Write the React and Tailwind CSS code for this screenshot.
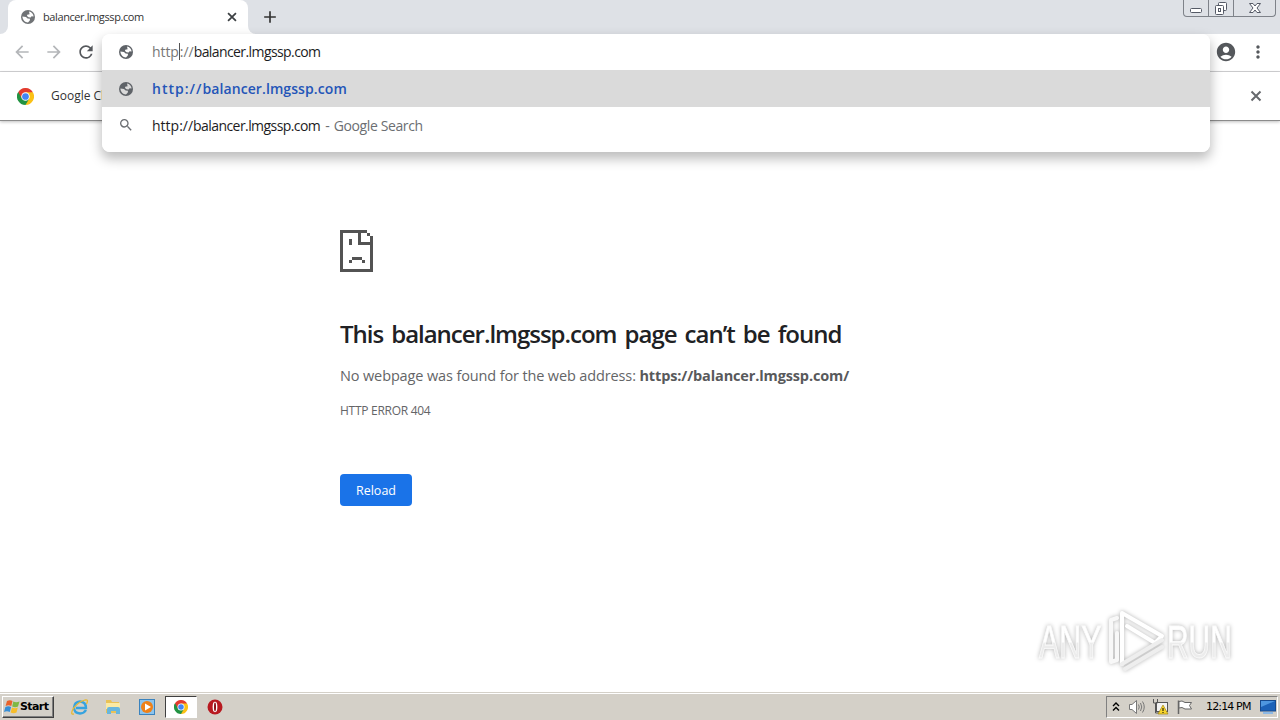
import { MdSearch, MdRefresh, MdArrowBack, MdArrowForward, MdAccountCircle, MdMoreVert, MdAdd } from "react-icons/md";

/* ── Shared icons ─────────────────────────── */
function Globe({ className, land = "#fff" }) {
  return (
    <svg viewBox="0 0 16 16" className={className}>
      <circle cx="8" cy="8" r="7" fill="currentColor" />
      <path d="M9 2.4C11.6 2.8 13.5 5 13.6 7.6L11.6 7.2L10.6 8.6L8.6 8.2L7 7L7.2 5.8L9.6 5.2Z" fill={land} />
      <path d="M2.4 7.6L6 8L7.6 9.6L10 9.8L9.8 11.4L8 13.6C5 13.4 2.5 11 2.4 7.6Z" fill={land} />
    </svg>
  );
}

function CloseIcon({ className }) {
  return (
    <svg viewBox="0 0 16 16" className={className} fill="none" stroke="currentColor" strokeWidth="2">
      <path d="M3.5 3.5L12.5 12.5M12.5 3.5L3.5 12.5" />
    </svg>
  );
}

function ChromeLogo({ className }) {
  return (
    <svg viewBox="0 0 48 48" className={className}>
      <path d="M24 24 L3.2 12 A24 24 0 0 1 44.8 12 Z" fill="#e33b2e" />
      <path d="M24 24 L44.8 12 A24 24 0 0 1 24 48 Z" fill="#fbc116" />
      <path d="M24 24 L24 48 A24 24 0 0 1 3.2 12 Z" fill="#229342" />
      <path d="M24 12 H44.8 L34.4 30 Z" fill="#fbc116" />
      <path d="M34.4 30 L24 48 L13.6 30 Z" fill="#229342" />
      <path d="M13.6 30 L3.2 12 L24 12 Z" fill="#e33b2e" />
      <path d="M3.2 12 L13.6 30 L8 34 L0 24 Z" fill="#229342" />
      <circle cx="24" cy="24" r="12" fill="#fff" />
      <circle cx="24" cy="24" r="9.5" fill="#4285f4" />
    </svg>
  );
}

function SadPage() {
  return (
    <svg viewBox="0 0 33 42" className="block h-[42px] w-[33px]" shapeRendering="crispEdges" fill="#535353">
      <path d="M0 0H27V3H3V39H30V15H18V3H21V12H30V6H33V42H0Z" />
      <path d="M27 3H30V6H27Z M9 9H12V15H9Z M12 27H22V30H12Z M9 30H12V33H9Z M22 30H25V33H22Z" />
    </svg>
  );
}

/* ── Browser chrome ───────────────────────── */
function TabStrip() {
  return (
    <div className="flex h-[34px] bg-[#dee1e6]">
      <div className="w-2 bg-white">
        <div className="h-full rounded-br-lg bg-[#dee1e6]" />
      </div>
      <div className="flex w-60 items-center rounded-t-lg bg-white pl-3 pr-[9px]">
        <Globe className="size-4 text-[#707376]" />
        <span className="ml-[7px] grow font-['Open_Sans',sans-serif] text-[11px] tracking-[-0.4px] text-[#333]">balancer.lmgssp.com</span>
        <CloseIcon className="size-[14px] text-[#3c4043]" />
      </div>
      <div className="w-2 bg-white">
        <div className="h-full rounded-bl-lg bg-[#dee1e6]" />
      </div>
      <MdAdd className="ml-1 mt-[7px] size-5 text-[#333]" />
      <div className="ml-auto mr-1 flex h-[17px] w-[93px] rounded-b border border-t-0 border-[#7e8289]">
        <div className="flex w-[25px] items-center justify-center border-r border-[#7e8289]">
          <svg viewBox="0 0 24 16" className="h-4 w-6" fill="#fff" stroke="#555a66">
            <rect x="6.5" y="8.5" width="11" height="4" rx="1" />
          </svg>
        </div>
        <div className="flex w-[25px] items-center justify-center border-r border-[#7e8289]">
          <svg viewBox="0 0 24 16" className="h-4 w-6" fill="#fff" stroke="#555a66">
            <rect x="9.5" y="2.5" width="8" height="8" rx="1" />
            <rect x="6.5" y="5.5" width="8" height="9" rx="1" />
            <rect x="9.5" y="8.5" width="2" height="3" />
          </svg>
        </div>
        <div className="flex grow items-center justify-center">
          <svg viewBox="0 0 14 12" className="h-3 w-[14px]" fill="#fff" stroke="#555a66">
            <path d="M1.5 1.5H5L7 4L9 1.5H12.5L9 6L12.5 10.5H9L7 8L5 10.5H1.5L5 6Z" />
          </svg>
        </div>
      </div>
    </div>
  );
}

function Omnibox() {
  return (
    <div className="absolute left-[102px] top-0 z-10 h-[118px] w-[1108px] overflow-hidden rounded-lg bg-white font-['Open_Sans',sans-serif] text-[14px] text-[#1c1c1e]">
      <div className="flex h-9 items-center pl-4">
        <Globe className="size-4 text-[#5f6368]" />
        <div className="ml-[18px] flex items-center pb-0.5">
          <span className="tracking-[-0.1px] text-[#777]">http</span>
          <span className="h-[17px] w-px bg-[#555]" />
          <span className="text-[#777]">://</span>
          <span className="tracking-[-0.59px]">balancer.lmgssp.com</span>
        </div>
      </div>
      <div className="flex h-[37px] items-center bg-[#dadada] pl-4 font-semibold text-[#2455b8]">
        <Globe className="size-4 text-[#5f6368]" land="#dadada" />
        <span className="ml-[18px] tracking-[1px]">http://</span>
        <span className="tracking-[0.09px]">balancer.lmgssp.com</span>
      </div>
      <div className="flex h-9 items-center pl-4">
        <MdSearch className="size-4 text-[#6b6e72]" />
        <span className="ml-[18px]">http://</span>
        <span className="tracking-[-0.57px]">balancer.lmgssp.com</span>
        <span className="ml-[5px] text-[#6b6e72]">-</span>
        <span className="ml-1 tracking-[-0.39px] text-[#6b6e72]">Google Search</span>
      </div>
    </div>
  );
}

function Toolbar() {
  return (
    <div className="relative">
      <div className="flex h-[38px] items-center border-b border-[#d4d4d6] bg-white pb-px pl-3">
        <MdArrowBack className="size-5 text-[#b4b6b9]" />
        <MdArrowForward className="ml-3 size-5 text-[#b4b6b9]" />
        <MdRefresh className="ml-3 size-5 text-[#55585c]" />
        <MdAccountCircle className="ml-auto size-[22px] text-[#55585c]" />
        <MdMoreVert className="ml-[11px] mr-3 size-5 text-[#55585c]" />
      </div>
      <div className="flex h-[49px] items-center border-b border-[#8b8b8b] bg-white pl-[17px] pr-4 shadow-[0_1px_3px_rgba(0,0,0,0.25)]">
        <ChromeLogo className="size-[17px]" />
        <span className="ml-[17px] font-['Open_Sans',sans-serif] text-[12px] text-[#333]">Google Ch</span>
        <CloseIcon className="ml-auto size-4 text-[#66696d]" />
      </div>
      <div className="absolute left-[102px] top-0 h-[118px] w-[1108px] rounded-lg shadow-[0_6px_12px_1px_rgba(0,0,0,0.26)]" />
      <Omnibox />
    </div>
  );
}

/* ── Error page ───────────────────────────── */
function ErrorPage() {
  return (
    <main className="flex grow flex-col items-start pl-[340px] pt-[109px] font-['Open_Sans',sans-serif] text-[#646567]">
      <SadPage />
      <h1 className="mt-[46px] whitespace-nowrap text-[24px] font-semibold leading-8 tracking-[-1.02px] text-[#202124] [word-spacing:2.9px]">This balancer.lmgssp.com page can’t be found</h1>
      <p className="mt-4 whitespace-nowrap text-[14.5px] leading-5 tracking-[-0.13px]">
        No webpage was found for the web address: <b className="text-[#58595b]">https://balancer.lmgssp.com/</b>
      </p>
      <p className="mt-[17px] text-[12px] leading-4 tracking-[-0.28px]">HTTP ERROR 404</p>
      <button className="mt-[55px] h-8 w-[72px] rounded bg-[#1a73e8] pt-0.5 text-[12.5px] text-white">Reload</button>
    </main>
  );
}

function Watermark() {
  return (
    <div className="absolute left-[1036px] top-[605px] drop-shadow-[0_0_2px_rgba(0,0,0,0.3)]">
      <svg viewBox="0 0 210 68" className="h-[68px] w-[210px]">
        <defs>
          <linearGradient id="fade" x1="0" y1="0" x2="0" y2="1">
            <stop offset="0.5" stopColor="#fff" />
            <stop offset="0.52" stopColor="#ececec" />
          </linearGradient>
        </defs>
        <g fill="url(#fade)" fontFamily="Liberation Sans, sans-serif" fontSize="46" stroke="#fbfbfb" strokeWidth="0.9">
          <text transform="translate(3 53) scale(0.66 1)">ANY</text>
          <text transform="translate(131 53) scale(0.65 1)">RUN</text>
        </g>
        <g fill="none" strokeWidth="4" strokeLinejoin="round" strokeLinecap="round">
          <path d="M81 13 L75 15 V57 L81 55 V28" stroke="#f8f8f8" />
          <path d="M86 59 V8 L126 31 L119 38 L91 21" stroke="#fff" />
          <path d="M86 59 L126 35 M89 64 L126 42" stroke="#eee" />
        </g>
      </svg>
    </div>
  );
}

/* ── Windows taskbar ──────────────────────── */
function Taskbar() {
  return (
    <footer className="flex h-7 items-center border-t border-[#d4d0c8] bg-[#d4d0c8] pl-0.5 font-['DejaVu_Sans',sans-serif] text-black shadow-[inset_0_1px_0_#fff]">
      <button className="flex h-[22px] w-[52px] items-center border border-b-[#404040] border-l-white border-r-[#404040] border-t-white pl-px shadow-[inset_-1px_-1px_0_#808080]">
        <svg viewBox="0 0 17 16" className="h-4 w-[17px] shrink-0">
          <path d="M3 2Q6 .5 8.5 2L7.3 7Q4.5 5.5 1.6 7Z" fill="#e9622b" />
          <path d="M9.3 2.4Q12 4 15.5 2.5L14 7.5Q11 9 8.2 7.4Z" fill="#7eb843" />
          <path d="M1.4 8Q4.4 6.5 7.1 8L5.8 13Q3 11.7 0 13Z" fill="#378ed6" />
          <path d="M8 8.4Q11 10 13.8 8.5L12.5 13.5Q9.5 15 6.6 13.4Z" fill="#f7bd2a" />
        </svg>
        <span className="-ml-px pt-0.5 text-[11px] font-bold tracking-[-0.6px]">Start</span>
      </button>
      <svg viewBox="0 0 18 18" className="ml-[17px] size-[18px] shrink-0" fill="none">
        <path d="M15 12Q13 15.5 9 15.5Q3 15 3 9.5Q3.5 4 9 3.5Q15 4 15 10H5" stroke="#36a3df" strokeWidth="2.4" />
        <path d="M3 16Q-1 17 2 11Q7 4 14 2Q18 1 15.5 6" stroke="#e8b934" strokeWidth="1.3" />
      </svg>
      <svg viewBox="0 0 18 18" className="ml-[15px] size-[18px] shrink-0">
        <path d="M2 2H7L8 4H15V15H2Z" fill="#e9c257" />
        <path d="M2 5H16V11H2Z" fill="#fbeaa3" />
        <path d="M3 16V11Q3 9 5 9H14Q16 9 16 11V16H12V13H7V16Z" fill="#68b6dd" />
      </svg>
      <svg viewBox="0 0 16 16" className="ml-[17px] size-4 shrink-0">
        <rect x=".5" y=".5" width="15" height="15" fill="#8cc4ed" stroke="#3a83be" />
        <circle cx="8" cy="8" r="6" fill="#ef8118" />
        <path d="M6 4.5L12 8L6 11.5Z" fill="#fff" />
      </svg>
      <div className="ml-[10px] flex h-[22px] w-8 items-center justify-center border border-b-white border-l-[#404040] border-r-white border-t-[#404040] bg-white">
        <ChromeLogo className="size-[14px]" />
      </div>
      <svg viewBox="0 0 16 16" className="ml-[10px] size-4 shrink-0">
        <circle cx="8" cy="8" r="7.5" fill="#b81920" />
        <ellipse cx="8" cy="8" rx="2.4" ry="5.2" fill="#fff" />
        <ellipse cx="8" cy="8" rx="1" ry="4.4" fill="#8b1016" />
      </svg>
      <div className="ml-auto mr-0.5 flex h-[22px] w-[172px] items-center border border-b-white border-l-[#808080] border-r-white border-t-[#808080]">
        <svg viewBox="0 0 8 10" className="ml-[5px] h-[10px] w-2 shrink-0" fill="none" stroke="#000" strokeWidth="1.4">
          <path d="M1 4L4 1L7 4M1 8.5L4 5.5L7 8.5" />
        </svg>
        <svg viewBox="0 0 18 16" className="ml-2 h-4 w-[18px] shrink-0" fill="#fff" stroke="#777">
          <path d="M1.5 5.5H4L8.5 1.5V14.5L4 10.5H1.5Z" />
          <path d="M10.5 5.5Q12 8 10.5 10.5M12.5 4Q15 8 12.5 12M14.5 2.5Q18 8 14.5 13.5" fill="none" />
        </svg>
        <svg viewBox="0 0 17 16" className="ml-[6px] h-4 w-[17px] shrink-0">
          <rect x="4.5" y="3.5" width="11" height="9" fill="#f2f2f2" stroke="#555" />
          <path d="M1.5 0V4H5.5V0M3.5 4V14M3.5 14H8" fill="none" stroke="#555" />
          <path d="M11 6L16 15H6Z" fill="#f7d52d" stroke="#a28510" strokeWidth=".7" />
          <path d="M11 9V12M11 13V14" stroke="#000" />
        </svg>
        <svg viewBox="0 0 16 16" className="ml-[8px] size-4 shrink-0" fill="#fff" stroke="#666">
          <path d="M1.5 15V1.5" strokeWidth="1.5" />
          <path d="M2 2.5Q5 1 8 3.5H14.5L12.5 6.5L14.5 10H8Q5 7.5 2 9Z" />
        </svg>
        <span className="ml-[13px] whitespace-nowrap pt-0.5 text-[11px] tracking-[-0.85px]">12:14 PM</span>
        <svg viewBox="0 0 16 14" className="ml-auto mr-px h-[14px] w-4 shrink-0">
          <rect x=".5" y=".5" width="15" height="10.5" fill="#1c62b8" stroke="#164a8e" />
          <path d="M1 1H15L1 7Z" fill="#4e97e0" />
          <path d="M3 13H13" stroke="#8cb9e6" strokeWidth="2" />
        </svg>
      </div>
    </footer>
  );
}

export default function App() {
  return (
    <div className="relative flex h-[720px] w-[1280px] flex-col overflow-hidden bg-white">
      <TabStrip />
      <Toolbar />
      <ErrorPage />
      <Watermark />
      <Taskbar />
    </div>
  );
}
